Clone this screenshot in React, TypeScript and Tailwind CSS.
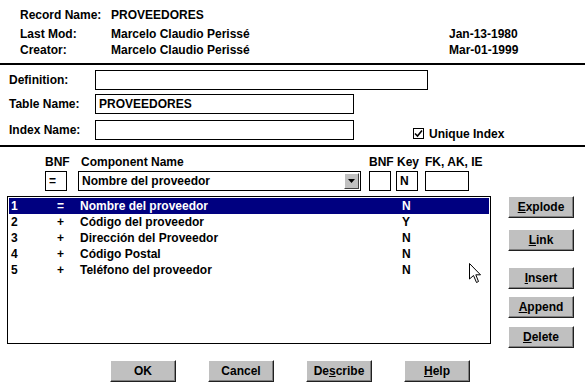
import type { ReactNode } from "react";

function Btn({ children, className = "" }: { children: ReactNode; className?: string }) {
  return (
    <div
      className={`h-[22px] w-[66px] flex items-center justify-center bg-[#c0c0c0] border border-t-white border-l-white border-r-[#202020] border-b-[#202020] shadow-[inset_-1px_-1px_0_#808080] text-black ${className}`}
    >
      {children}
    </div>
  );
}

function Field({ className = "", children }: { className?: string; children?: ReactNode }) {
  return (
    <div className={`h-[20px] border border-black bg-white flex items-center pl-[3px] ${className}`}>
      {children}
    </div>
  );
}

const rows = [
  { n: "1", bnf: "=", name: "Nombre del proveedor", key: "N" },
  { n: "2", bnf: "+", name: "Código del proveedor", key: "Y" },
  { n: "3", bnf: "+", name: "Dirección del Proveedor", key: "N" },
  { n: "4", bnf: "+", name: "Código Postal", key: "N" },
  { n: "5", bnf: "+", name: "Teléfono del proveedor", key: "N" },
];

export default function App() {
  return (
    <div
      className="w-[585px] h-[390px] bg-white relative overflow-hidden text-black font-bold text-[12px] leading-none"
      style={{ fontFamily: '"Liberation Sans", Arial, sans-serif' }}
    >
      {/* header */}
      <div className="pt-[7px] pl-[20px]">
        <div className="h-[16px] flex items-center">
          <span className="w-[91px]">Record Name:</span>
          <span>PROVEEDORES</span>
        </div>
        <div className="h-[16px] mt-[3px] flex items-center">
          <span className="w-[91px]">Last Mod:</span>
          <span className="w-[338px]">Marcelo Claudio Perissé</span>
          <span>Jan-13-1980</span>
        </div>
        <div className="h-[16px] flex items-center">
          <span className="w-[91px]">Creator:</span>
          <span className="w-[338px]">Marcelo Claudio Perissé</span>
          <span>Mar-01-1999</span>
        </div>
      </div>
      <div className="mt-[5px] h-[2px] bg-black" />

      {/* definition block */}
      <div className="pl-[9px] mt-[5px]">
        <div className="flex items-center">
          <span className="w-[86px]">Definition:</span>
          <Field className="w-[333px]" />
        </div>
        <div className="flex items-center mt-[4px]">
          <span className="w-[86px]">Table Name:</span>
          <Field className="w-[259px]">PROVEEDORES</Field>
        </div>
        <div className="flex items-center mt-[6px]">
          <span className="w-[86px]">Index Name:</span>
          <Field className="w-[259px]" />
          <div className="ml-[59px] flex items-center gap-[5px] mt-[7px]">
            <div className="w-[11px] h-[11px] border border-black bg-white flex items-center justify-center">
              <svg width="9" height="9" viewBox="0 0 9 9">
                <path d="M1 4.5 L3.5 7 L8 1.5" fill="none" stroke="black" strokeWidth="1.6" />
              </svg>
            </div>
            <span>Unique Index</span>
          </div>
        </div>
      </div>
      <div className="mt-[5px] h-[2px] bg-black" />

      {/* component line */}
      <div className="mt-[8px] flex h-[13px] items-center">
        <span className="ml-[45px] w-[36px]">BNF</span>
        <span className="w-[288px]">Component Name</span>
        <span className="w-[28px]">BNF</span>
        <span className="w-[28px]">Key</span>
        <span>FK, AK, IE</span>
      </div>
      <div className="mt-[3px] flex">
        <Field className="ml-[45px] w-[22px]">=</Field>
        <div className="ml-[11px] w-[283px] h-[20px] border border-black flex items-center pl-[3px] pr-[1px]">
          <span className="flex-1">Nombre del proveedor</span>
          <div className="w-[15px] h-[16px] bg-[#c0c0c0] border border-t-white border-l-white border-r-[#404040] border-b-[#404040] flex items-center justify-center">
            <svg width="7" height="4" viewBox="0 0 7 4">
              <path d="M0 0 H7 L3.5 4 Z" fill="black" />
            </svg>
          </div>
        </div>
        <Field className="ml-[8px] w-[22px]" />
        <Field className="ml-[5px] w-[22px]">N</Field>
        <Field className="ml-[7px] w-[44px]" />
      </div>

      {/* list + side buttons */}
      <div className="mt-[5px] flex items-start">
        <div className="ml-[7px] w-[484px] h-[148px] border border-black pt-px px-px">
          {rows.map((r, i) => (
            <div
              key={r.n}
              className={`h-[16px] flex items-center ${i === 0 ? "bg-[#000080] text-white" : ""}`}
            >
              <span className="pl-[2px] w-[48px]">{r.n}</span>
              <span className="w-[23px]">{r.bnf}</span>
              <span className="w-[322px]">{r.name}</span>
              <span>{r.key}</span>
            </div>
          ))}
        </div>
        <div className="ml-[17px] flex flex-col">
          <Btn>
            <u>E</u>xplode
          </Btn>
          <Btn className="mt-[11px]">
            <u>L</u>ink
          </Btn>
          <Btn className="mt-[16px]">
            <u>I</u>nsert
          </Btn>
          <Btn className="mt-[7px]">
            <u>A</u>ppend
          </Btn>
          <Btn className="mt-[8px]">
            <u>D</u>elete
          </Btn>
        </div>
      </div>

      {/* bottom buttons */}
      <div className="mt-[12px] ml-[110px] flex gap-[32px]">
        <Btn>OK</Btn>
        <Btn>Cancel</Btn>
        <Btn>
          De<u>s</u>cribe
        </Btn>
        <Btn>
          <u>H</u>elp
        </Btn>
      </div>

      {/* mouse pointer */}
      <svg className="absolute left-[469px] top-[263px]" width="13" height="21" viewBox="0 0 13 21">
        <path
          d="M0.5 0.5 L0.5 16 L4.5 12.5 L7.5 19.5 L9.5 18.5 L6.8 11.8 L11.5 11.8 Z"
          fill="white"
          stroke="black"
          strokeWidth="1"
        />
      </svg>
    </div>
  );
}
